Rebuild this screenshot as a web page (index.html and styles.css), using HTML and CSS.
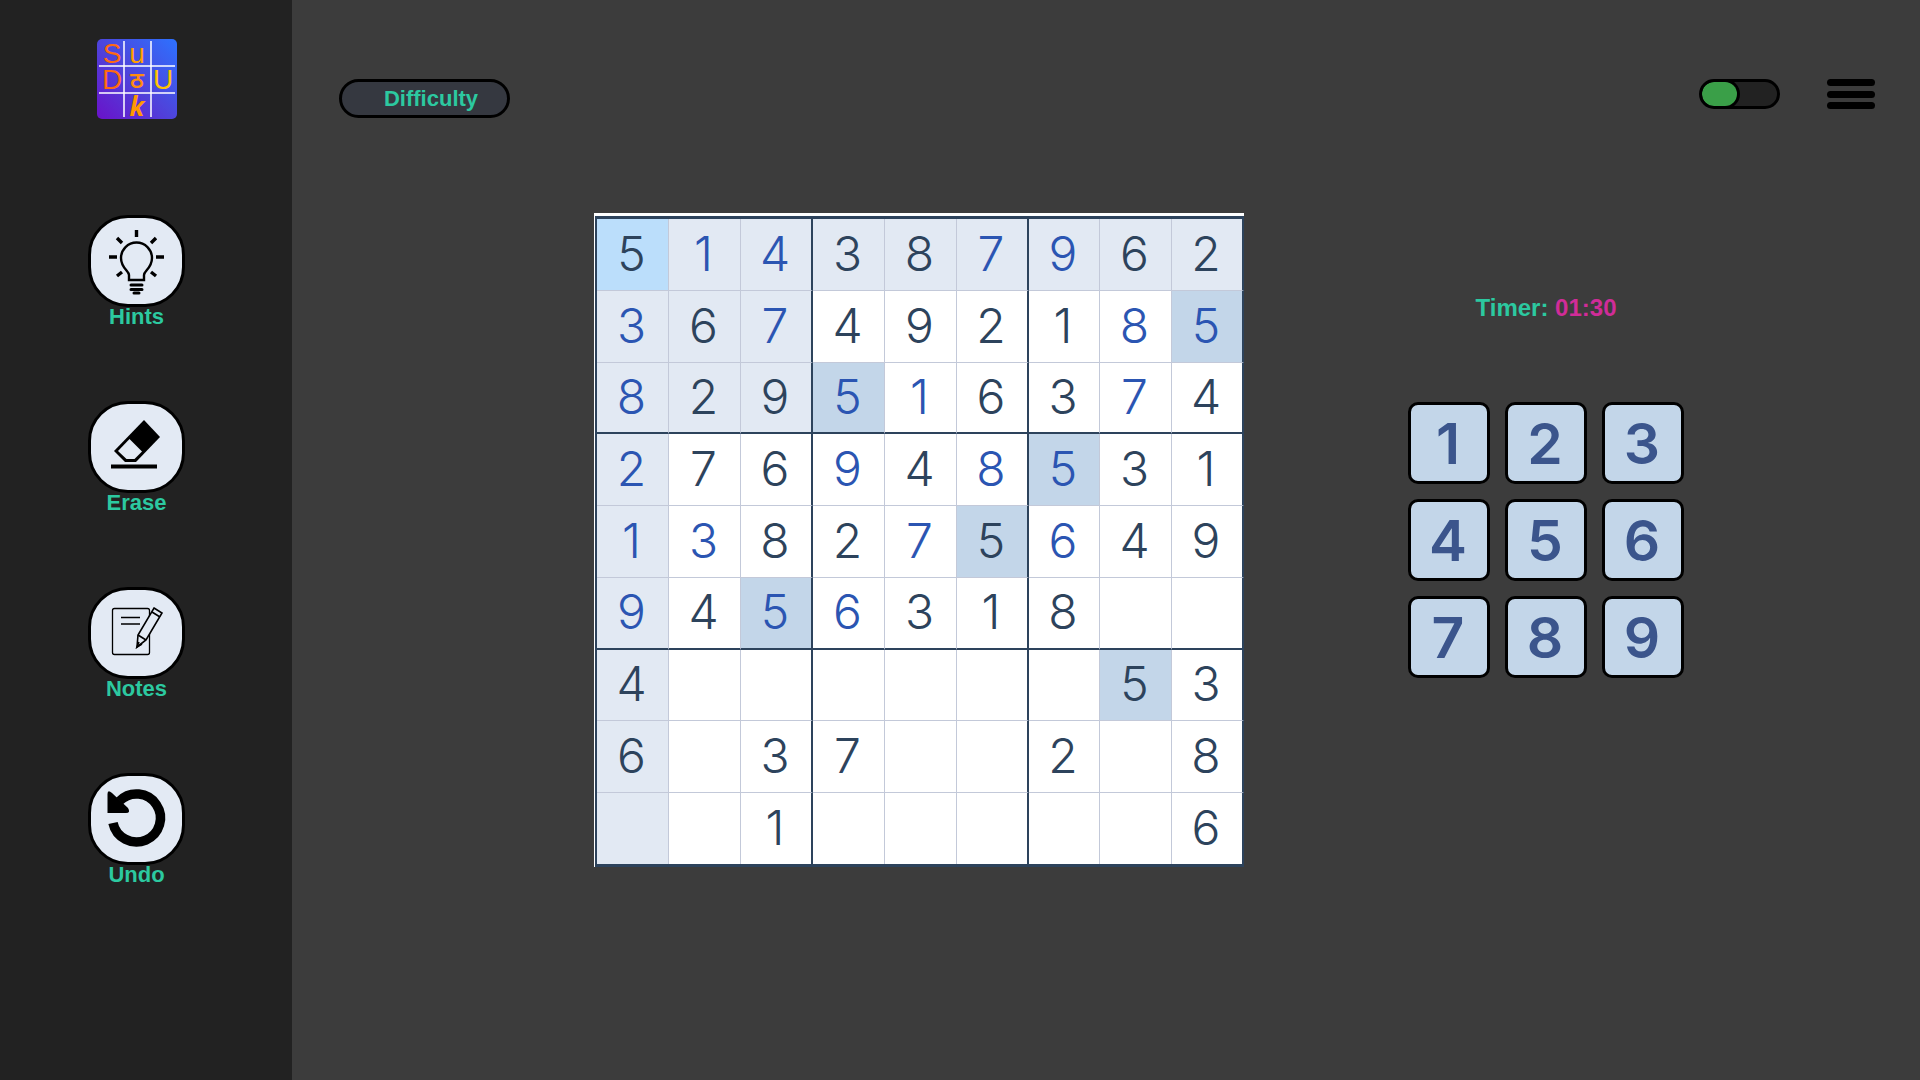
FILE: index.html
```html
<!DOCTYPE html>
<html lang="en">
<head>
<meta charset="utf-8">
<meta name="viewport" content="width=device-width, initial-scale=1">
<title>Sudoku</title>
<link rel="stylesheet" href="styles.css">
</head>
<body>
<div class="app">
  <aside class="sidebar">
    <a class="logo" href="#" aria-label="Sudoku home">
      <svg viewBox="0 0 80 80" width="80" height="80">
        <defs>
          <linearGradient id="tile" x1="0" y1="1" x2="1" y2="0">
            <stop offset="0" stop-color="#6a12c9"/>
            <stop offset="0.5" stop-color="#4d45dc"/>
            <stop offset="1" stop-color="#2d72ff"/>
          </linearGradient>
        </defs>
        <rect width="80" height="80" rx="5" fill="url(#tile)"/>
        <path d="M27 2V78M54 2V78M2 27H78M2 54H78" stroke="#fff" stroke-width="1.5"/>
        <g class="logo-letters">
          <text x="15" y="24" fill="#ff6a10">S</text>
          <text x="40" y="24" fill="#ffa000">u</text>
          <text x="15" y="50" fill="#ff6a10">D</text>
          <text x="40" y="49" class="logo-center" fill="#ff8c10">ठ</text>
          <text x="66" y="50" fill="#ffc400">U</text>
          <text x="40" y="77" class="logo-k" fill="#ff9800">k</text>
        </g>
      </svg>
    </a>
    <nav class="tools" aria-label="Game tools">
      <button class="tool" type="button">
        <span class="tool-icon">
          <svg viewBox="0 0 97 92" width="97" height="92" fill="none" stroke="#000" stroke-width="2.4">
            <path d="M41 65V60C41 56 33 53 33 43A15.500 15.500 0 0 1 64 43C64 53 56 56 56 60V65Z"/>
            <path d="M43 70H54M43 74.500H54M46 78H51" stroke-width="3" stroke-linecap="round"/>
            <path d="M48.500 15V22M21 42H29M68 42H76M29 23L34 28M68 23L63 28M29 61L34 57M68 61L63 57" stroke-width="3.400"/>
          </svg>
        </span>
        <span class="tool-label">Hints</span>
      </button>
      <button class="tool" type="button">
        <span class="tool-icon">
          <svg viewBox="0 0 97 92" width="97" height="92">
            <path d="M56 19L72 36L48 61H37L26 50Z" fill="#000"/>
            <path d="M41.500 38L54 50.500L46.500 58H38.500L30 50Z" fill="#e3eaf4"/>
            <path d="M23 65.500H69" stroke="#000" stroke-width="4"/>
          </svg>
        </span>
        <span class="tool-label">Erase</span>
      </button>
      <button class="tool" type="button">
        <span class="tool-icon">
          <svg viewBox="0 0 97 92" width="97" height="92" fill="none" stroke="#000" stroke-width="1.300">
            <rect x="24.500" y="21.500" width="37" height="46" rx="2"/>
            <path d="M33 30.500H52M33 37H52" stroke-width="1.500"/>
            <path d="M66 21L74 26L58 53L49 60L50 48Z" fill="#e3eaf4" stroke-width="1.600"/>
            <path d="M64 25L72 30M50 48L58 53M51 55L49 60L54 57" stroke-width="1.600"/>
          </svg>
        </span>
        <span class="tool-label">Notes</span>
      </button>
      <button class="tool" type="button">
        <span class="tool-icon">
          <svg viewBox="0 0 97 92" width="97" height="92">
            <path d="M25 50A24 24 0 1 0 31.500 28" fill="none" stroke="#000" stroke-width="9.500"/>
            <path d="M19.500 21Q19.500 16 24 20L40 35Q43 40 38 40H19.500Z" fill="#000"/>
          </svg>
        </span>
        <span class="tool-label">Undo</span>
      </button>
    </nav>
  </aside>

  <main class="main">
    <header class="topbar">
      <button class="difficulty" type="button">Difficulty</button>
      <div class="topbar-right">
        <input class="switch" type="checkbox" aria-label="Dark theme">
        <button class="menu" type="button" aria-label="Menu"><span></span><span></span><span></span></button>
      </div>
    </header>

    <div class="play">
      <div class="board-frame">
        <table class="board" aria-label="Sudoku board">
          <tbody>
            <tr><td class="picked">5</td><td class="near own">1</td><td class="near own">4</td><td class="near">3</td><td class="near">8</td><td class="near own">7</td><td class="near own">9</td><td class="near">6</td><td class="near">2</td></tr>
            <tr><td class="near own">3</td><td class="near">6</td><td class="near own">7</td><td>4</td><td>9</td><td>2</td><td>1</td><td class="own">8</td><td class="same own">5</td></tr>
            <tr><td class="near own">8</td><td class="near">2</td><td class="near">9</td><td class="same own">5</td><td class="own">1</td><td>6</td><td>3</td><td class="own">7</td><td>4</td></tr>
            <tr><td class="near own">2</td><td>7</td><td>6</td><td class="own">9</td><td>4</td><td class="own">8</td><td class="same own">5</td><td>3</td><td>1</td></tr>
            <tr><td class="near own">1</td><td class="own">3</td><td>8</td><td>2</td><td class="own">7</td><td class="same">5</td><td class="own">6</td><td>4</td><td>9</td></tr>
            <tr><td class="near own">9</td><td>4</td><td class="same own">5</td><td class="own">6</td><td>3</td><td>1</td><td>8</td><td></td><td></td></tr>
            <tr><td class="near">4</td><td></td><td></td><td></td><td></td><td></td><td></td><td class="same">5</td><td>3</td></tr>
            <tr><td class="near">6</td><td></td><td>3</td><td>7</td><td></td><td></td><td>2</td><td></td><td>8</td></tr>
            <tr><td class="near"></td><td></td><td>1</td><td></td><td></td><td></td><td></td><td></td><td>6</td></tr>
          </tbody>
        </table>
      </div>

      <section class="panel">
        <p class="timer">Timer: <span class="timer-value">01:30</span></p>
        <div class="keypad">
          <button type="button">1</button><button type="button">2</button><button type="button">3</button>
          <button type="button">4</button><button type="button">5</button><button type="button">6</button>
          <button type="button">7</button><button type="button">8</button><button type="button">9</button>
        </div>
      </section>
    </div>
  </main>
</div>
</body>
</html>
```
FILE: styles.css
```css
* {
  box-sizing: border-box;
}

body {
  margin: 0;
  background: #3c3c3c;
  font-family: "Liberation Sans", Arial, sans-serif;
}

button {
  margin: 0;
  padding: 0;
  border: 0;
  background: none;
  font: inherit;
  cursor: pointer;
}

.app {
  display: flex;
  min-height: 100vh;
}

/* Sidebar */

.sidebar {
  flex: 0 0 292px;
  display: flex;
  flex-direction: column;
  align-items: center;
  gap: 96px;
  padding: 39px 19px 39px 0;
  background: #222;
}

.logo,
.logo svg {
  display: block;
  overflow: visible;
}

.logo-letters {
  font-size: 28px;
  text-anchor: middle;
}

.logo-center {
  font-family: "Noto Sans", sans-serif;
  font-size: 23px;
  font-weight: 600;
}

.logo-k {
  font-family: "Open Sans", sans-serif;
  font-weight: 700;
  font-style: italic;
  font-size: 26px;
}

.tools {
  display: flex;
  flex-direction: column;
  gap: 68px;
}

.tool {
  display: flex;
  flex-direction: column;
  align-items: center;
}

.tool-icon {
  display: flex;
  align-items: center;
  justify-content: center;
  width: 97px;
  height: 92px;
  border: 3px solid #000;
  border-radius: 40px;
  background: #e3eaf4;
}

.tool-icon svg {
  flex: none;
}

.tool-label {
  color: #2cc9a0;
  font-size: 22px;
  font-weight: 700;
  line-height: 20px;
  height: 26px;
}

/* Main area */

.main {
  flex: 1;
  min-width: 0;
  padding: 79px 0 40px;
}

.topbar {
  display: flex;
  justify-content: space-between;
  align-items: flex-start;
  padding: 0 45px 0 47px;
}

.topbar-right {
  display: flex;
  gap: 47px;
}

.difficulty {
  width: 171px;
  height: 39px;
  padding-left: 13px;
  border: 3px solid #000;
  border-radius: 20px;
  background: #353840;
  color: #2cc9a0;
  font-size: 22px;
  font-weight: 700;
}

.switch {
  appearance: none;
  width: 81px;
  height: 30px;
  margin: 0;
  border: 3px solid #000;
  border-radius: 15px;
  background: #222;
  overflow: hidden;
  cursor: pointer;
}

.switch::before {
  content: "";
  display: block;
  width: 35px;
  height: 24px;
  border-radius: 12px;
  background: #3a9f48;
  box-shadow: 0 0 0 3px #000;
}

.menu {
  display: flex;
  flex-direction: column;
  justify-content: space-between;
  width: 48px;
  height: 30px;
}

.menu span {
  height: 7px;
  border-radius: 4px;
  background: #000;
}

.play {
  display: grid;
  grid-template-columns: minmax(0, 302fr) auto minmax(0, 164fr) auto minmax(0, 236fr);
  align-items: start;
  margin-top: 95px;
}

/* Board */

.board-frame {
  grid-column: 2;
  padding: 3px 0 0 1px;
  background: #fff;
}

.board {
  border: solid #2d435c;
  border-width: 3px 0 3px 2px;
  border-spacing: 0;
  color: #2d435c;
  font-family: Inter, sans-serif;
  font-size: 48px;
  font-weight: 300;
  line-height: 60px;
  text-align: center;
}

.board td {
  width: 72px;
  min-width: 72px;
  height: 72px;
  padding: 0 2px 2px 0;
  border: solid #c3c9d9;
  border-width: 0 1px 1px 0;
}

.board td:nth-child(3n) {
  border-right: 2px solid #2d435c;
}

.board td:nth-child(7) {
  width: 71px;
  min-width: 71px;
}

.board tr:nth-child(3n) td {
  border-bottom: 2px solid #2d435c;
}

.board tr:nth-child(3) td,
.board tr:nth-child(7) td,
.board tr:last-child td {
  height: 71px;
}

.board tr:last-child td {
  border-bottom: 0;
}

.board .near {
  background: #e2e9f3;
}

.board .same {
  background: #c3d6e9;
}

.board .picked {
  background: #bbdefb;
}

.board .own {
  color: #2b55b2;
}

/* Timer and keypad */

.panel {
  grid-column: 4;
  display: flex;
  flex-direction: column;
  align-items: center;
  gap: 82px;
  padding-top: 82px;
}

.timer {
  margin: 0;
  color: #2cc9a0;
  font-size: 24px;
  font-weight: 700;
  line-height: 25px;
}

.timer-value {
  color: #d02c98;
}

.keypad {
  display: grid;
  grid-template-columns: repeat(3, 82px);
  gap: 15px;
}

.keypad button {
  height: 82px;
  padding: 1px 2px 0 0;
  border: 3px solid #000;
  border-radius: 10px;
  background: #c3d6e9;
  color: #3b558c;
  font-family: Inter, sans-serif;
  font-size: 57px;
  font-weight: 600;
  line-height: 75px;
}
```
